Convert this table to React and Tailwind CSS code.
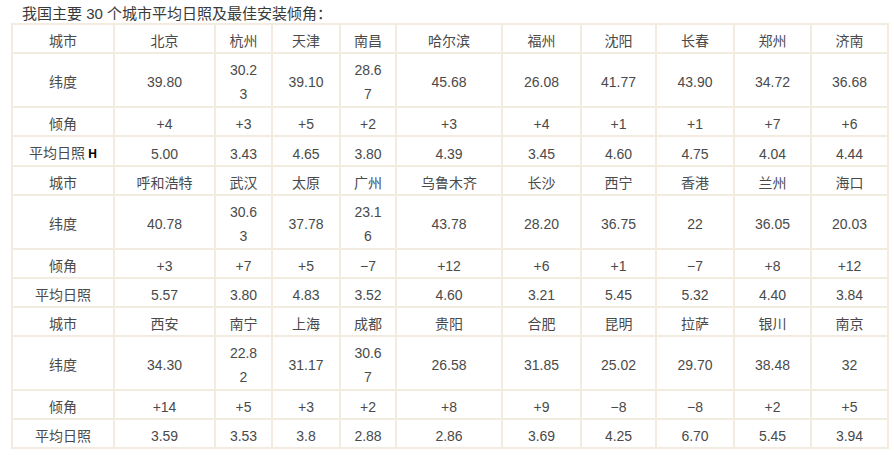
import React from "react";

const widths = [102, 101, 57, 68, 56, 106, 79, 75, 78, 77, 77];

const blocks = [
  {
    cities: ["北京", "杭州", "天津", "南昌", "哈尔滨", "福州", "沈阳", "长春", "郑州", "济南"],
    lat: ["39.80", ["30.2", "3"], "39.10", ["28.6", "7"], "45.68", "26.08", "41.77", "43.90", "34.72", "36.68"],
    tilt: ["+4", "+3", "+5", "+2", "+3", "+4", "+1", "+1", "+7", "+6"],
    sun: ["5.00", "3.43", "4.65", "3.80", "4.39", "3.45", "4.60", "4.75", "4.04", "4.44"],
    withH: true,
  },
  {
    cities: ["呼和浩特", "武汉", "太原", "广州", "乌鲁木齐", "长沙", "西宁", "香港", "兰州", "海口"],
    lat: ["40.78", ["30.6", "3"], "37.78", ["23.1", "6"], "43.78", "28.20", "36.75", "22", "36.05", "20.03"],
    tilt: ["+3", "+7", "+5", "−7", "+12", "+6", "+1", "−7", "+8", "+12"],
    sun: ["5.57", "3.80", "4.83", "3.52", "4.60", "3.21", "5.45", "5.32", "4.40", "3.84"],
  },
  {
    cities: ["西安", "南宁", "上海", "成都", "贵阳", "合肥", "昆明", "拉萨", "银川", "南京"],
    lat: ["34.30", ["22.8", "2"], "31.17", ["30.6", "7"], "26.58", "31.85", "25.02", "29.70", "38.48", "32"],
    tilt: ["+14", "+5", "+3", "+2", "+8", "+9", "−8", "−8", "+2", "+5"],
    sun: ["3.59", "3.53", "3.8", "2.88", "2.86", "3.69", "4.25", "6.70", "5.45", "3.94"],
  },
];

// short rows: 5 + 22 + 2 (borders) = 29
const Cell = ({ children }) => (
  <td className="border-2 border-[#f1ecdf] text-center align-middle px-1 pt-[5px] pb-0 leading-[22px]">
    {children}
  </td>
);

// latitude rows: 4 + 2*24 + 2 = 54
const LatCell = ({ children }) => (
  <td className="border-2 border-[#f1ecdf] text-center align-middle px-1 pt-[4px] pb-0 leading-[24px]">
    {children}
  </td>
);

const App = () => {
  return (
    <div className="w-[894px] h-[455px] bg-white text-[14px] text-[#4a4a4a] font-['Liberation_Sans','Noto_Sans_CJK_SC',sans-serif]">
      <div className="h-[23px] pl-[22px] text-[15px] leading-[27px] text-[#3a3a3a]">我国主要 30 个城市平均日照及最佳安装倾角：</div>
      <table className="ml-[11px] table-fixed border-collapse w-[876px]">
        <colgroup>
          {widths.map((w, i) => (
            <col key={i} style={{ width: w }} />
          ))}
        </colgroup>
        <tbody>
          {blocks.map((b, bi) => (
            <React.Fragment key={bi}>
              <tr>
                <Cell>城市</Cell>
                {b.cities.map((c, i) => (
                  <Cell key={i}>{c}</Cell>
                ))}
              </tr>
              <tr className="h-[54px]">
                <LatCell>纬度</LatCell>
                {b.lat.map((v, i) => (
                  <LatCell key={i}>
                    {Array.isArray(v) ? (
                      <>
                        {v[0]}
                        <br />
                        {v[1]}
                      </>
                    ) : (
                      v
                    )}
                  </LatCell>
                ))}
              </tr>
              <tr>
                <Cell>倾角</Cell>
                {b.tilt.map((v, i) => (
                  <Cell key={i}>{v}</Cell>
                ))}
              </tr>
              <tr>
                <Cell>
                  平均日照{b.withH && <b className="text-[12px] text-black"> H</b>}
                </Cell>
                {b.sun.map((v, i) => (
                  <Cell key={i}>{v}</Cell>
                ))}
              </tr>
            </React.Fragment>
          ))}
        </tbody>
      </table>
    </div>
  );
};

export default App;
